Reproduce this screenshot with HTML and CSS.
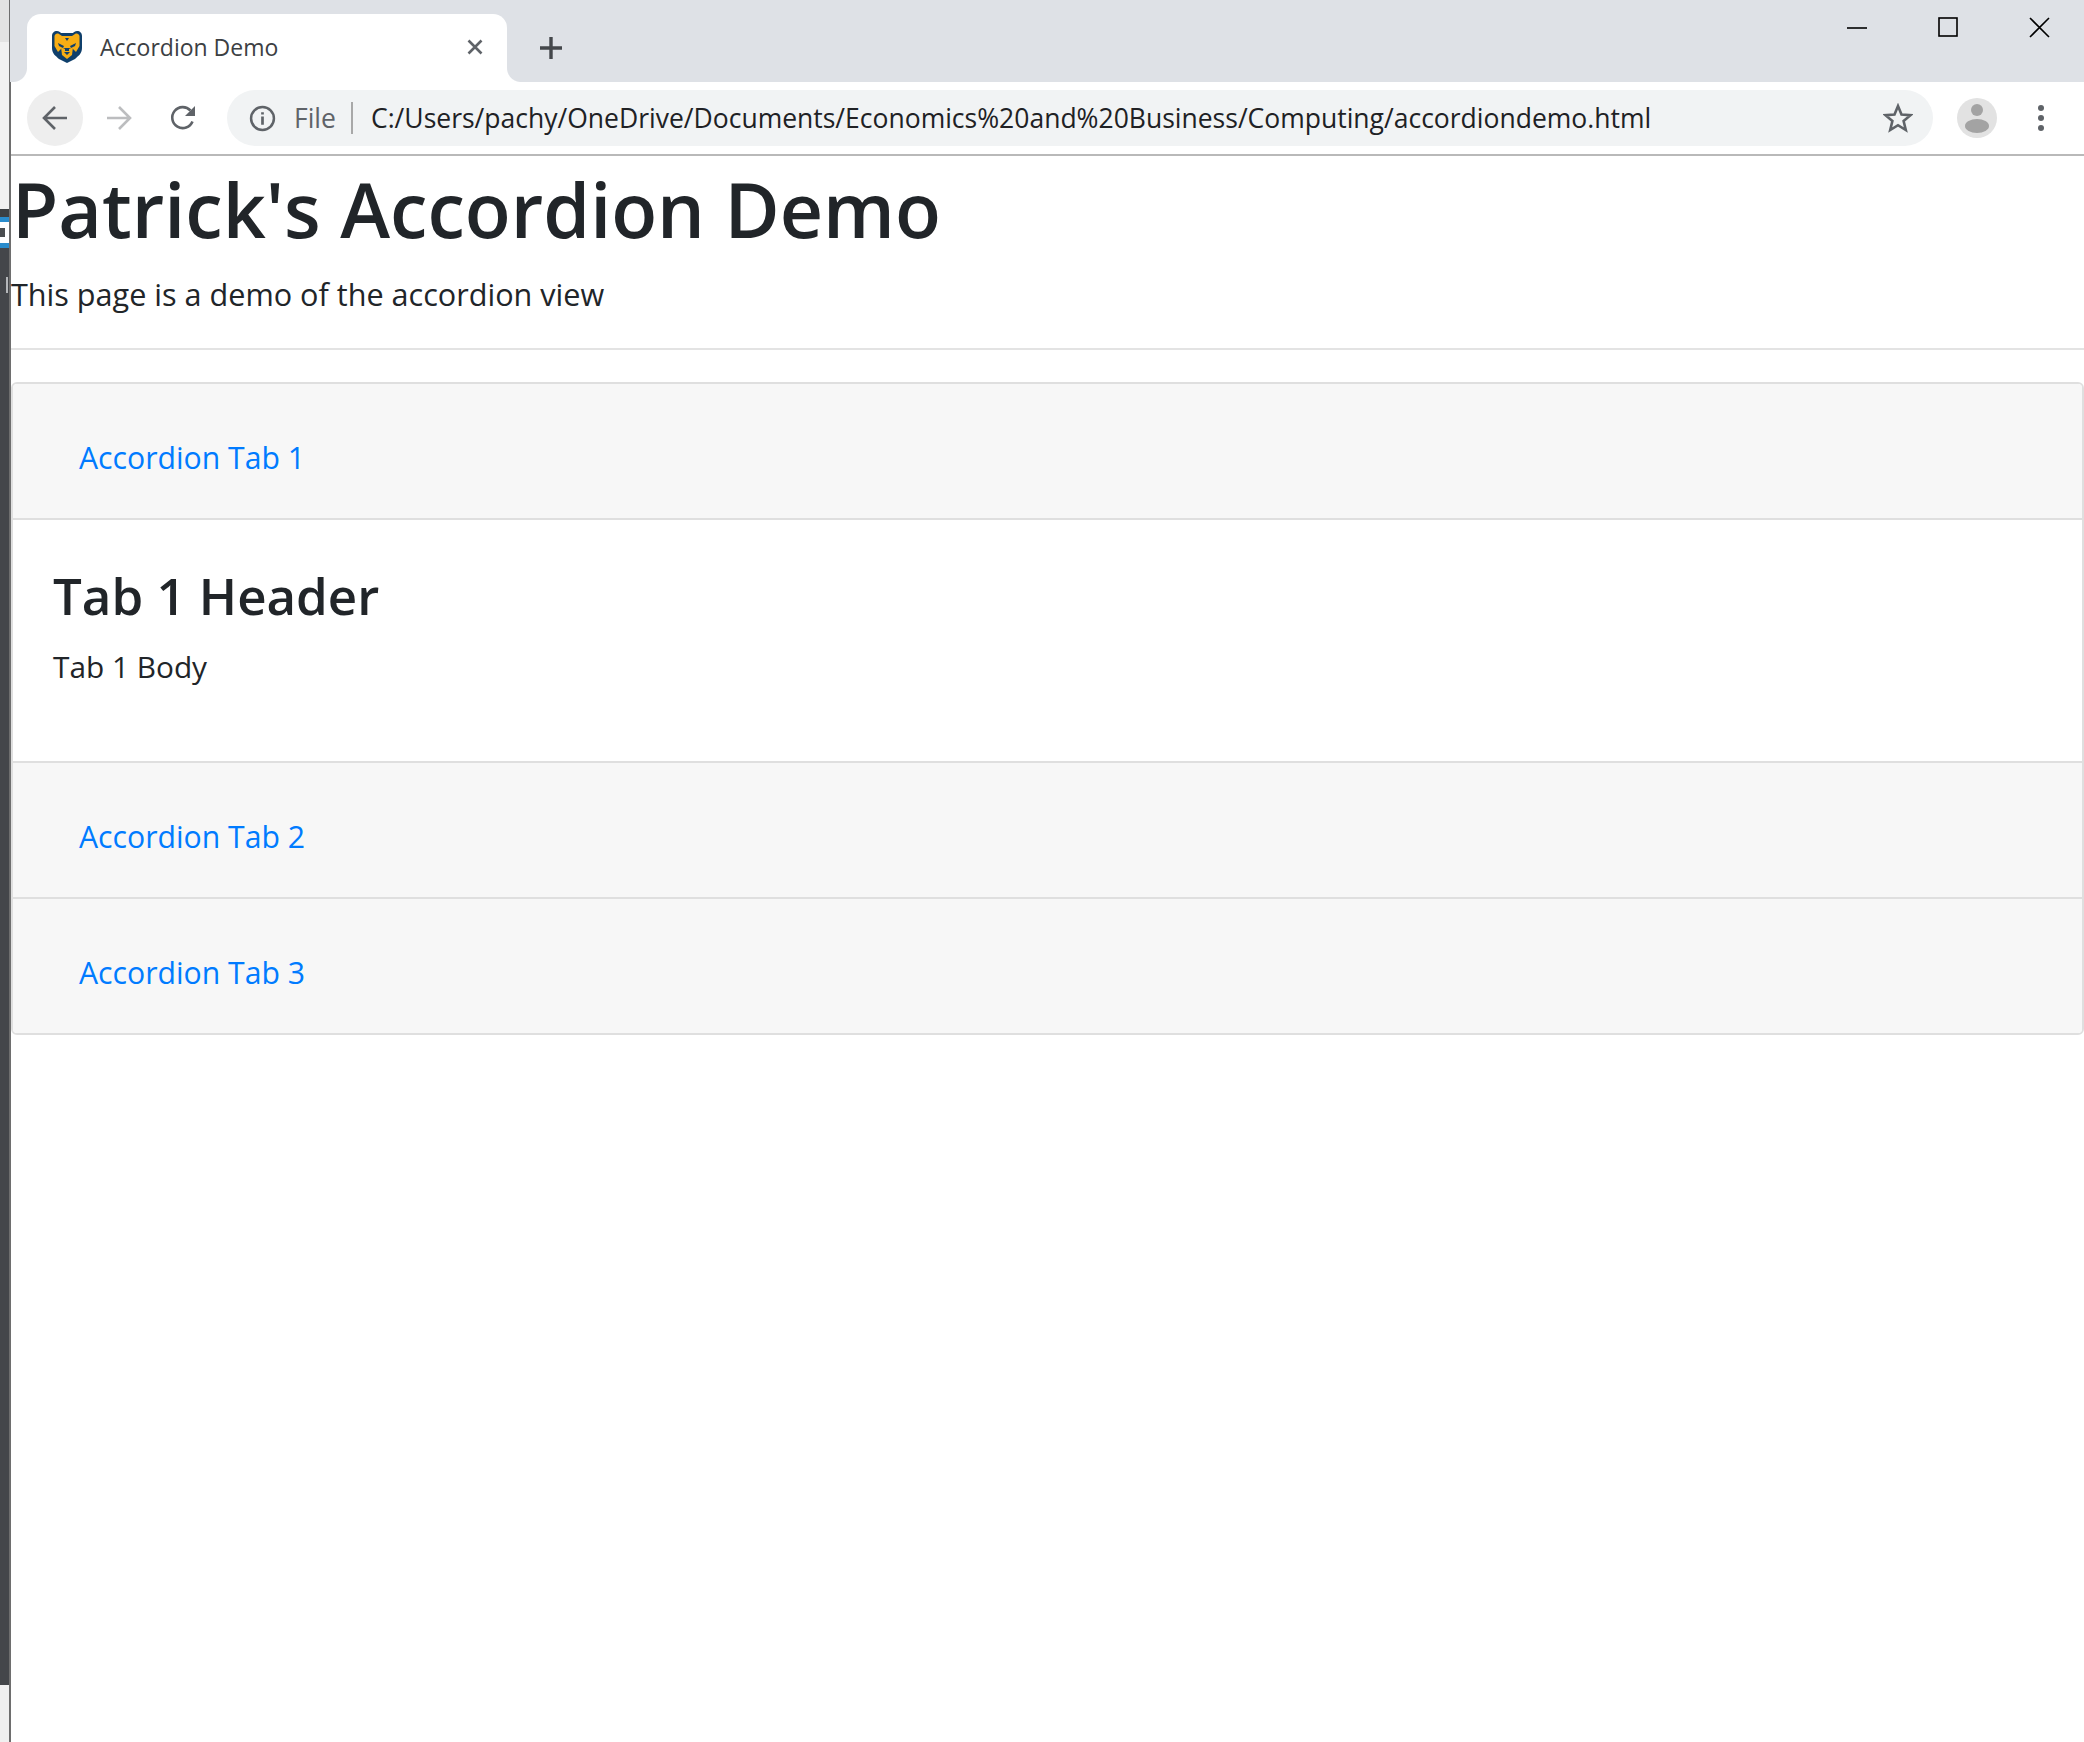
FILE: index.html
```html
<!DOCTYPE html>
<html lang="en">
<head>
    <meta charset="UTF-8">
    <title>Accordion Demo</title>
    <link rel="stylesheet" href="styles.css">
</head>
<body>
    <div class="Side-Strip">
        <div class="Strip-Top"></div>
        <div class="Strip-Light"></div>
        <div class="Strip-Blue">
            <svg class="Strip-Icon" viewBox="0 0 9 21">
                <path d="M0 0 H9 V21 H0 Z" fill="#ffffff"/>
                <path d="M0 6 H5 V15 H0 Z" fill="#4a4d50"/>
            </svg>
        </div>
        <div class="Strip-Dark">
            <div class="Strip-Mark"></div>
        </div>
        <div class="Strip-Bottom"></div>
    </div>
    <div class="Window">
        <div class="Tab-Strip">
            <div class="Tab">
                <svg class="Favicon" viewBox="0 0 30 32">
                    <path d="M0 5 C0 2 2 0 5 0 C7 0 8 1 9 2 H21 C22 1 23 0 25 0 C28 0 30 2 30 5 V17 C30 23 26 25 23 28 L15 32 L7 28 C4 25 0 23 0 17 Z" fill="#0f3f6b"/>
                    <path d="M2.5 5 C3 3 5 2 7 3 L10 5 H20 L23 3 C25 2 27 3 27.5 5 V15 L24 21 L20 17 H10 L6 21 L2.5 15 Z" fill="#f6ad14"/>
                    <path d="M9 16 L13 18 V20 H17 V18 L21 16 L20 24 L15 28 L10 24 Z" fill="#f6ad14"/>
                    <path d="M6 12 L12 15 L11 17 L7 15 Z M24 12 L18 15 L19 17 L23 15 Z M12 21 H18 L15 24 Z M13 7 L15 10 L17 7 Z" fill="#0f3f6b"/>
                </svg>
                <span class="Tab-Title">Accordion Demo</span>
                <svg class="Tab-Close" viewBox="0 0 16 16">
                    <path d="M1.5 1.5 L14.5 14.5 M14.5 1.5 L1.5 14.5" stroke="#5f6368" stroke-width="2.6" fill="none"/>
                </svg>
            </div>
            <svg class="New-Tab" viewBox="0 0 24 24">
                <path d="M12 1 V23 M1 12 H23" stroke="#44474b" stroke-width="3.4" fill="none"/>
            </svg>
            <div class="Window-Controls">
                <svg class="Win-Icon" viewBox="0 0 22 22"><path d="M0 11 H20" stroke="#000" stroke-width="1.6"/></svg>
                <svg class="Win-Icon" viewBox="0 0 22 22"><rect x="1" y="1" width="18" height="18" stroke="#000" stroke-width="1.6" fill="none"/></svg>
                <svg class="Win-Icon" viewBox="0 0 22 22"><path d="M1 1 L20 20 M20 1 L1 20" stroke="#000" stroke-width="1.6" fill="none"/></svg>
            </div>
        </div>
        <div class="Toolbar">
            <div class="Nav-Button Nav-Active">
                <svg viewBox="0 0 26 26"><path d="M25 13 H3 M13 2 L2 13 L13 24" stroke="#5f6368" stroke-width="2.6" fill="none"/></svg>
            </div>
            <div class="Nav-Button">
                <svg viewBox="0 0 26 26"><path d="M1 13 H23 M13 2 L24 13 L13 24" stroke="#bcbdbf" stroke-width="2.6" fill="none"/></svg>
            </div>
            <div class="Nav-Button">
                <svg viewBox="0 0 26 26"><path d="M22.5 16.5 A10.5 10.5 0 1 1 20.5 5.5" stroke="#5f6368" stroke-width="2.6" fill="none"/><path d="M25 1 V11 H15 Z" fill="#5f6368"/></svg>
            </div>
            <div class="Address-Bar">
                <svg class="Info-Icon" viewBox="0 0 26 26">
                    <circle cx="13" cy="13" r="11" stroke="#5f6368" stroke-width="2.4" fill="none"/>
                    <path d="M13 11 V19 M13 7 V9.2" stroke="#5f6368" stroke-width="2.6"/>
                </svg>
                <span class="File-Label">File</span>
                <span class="Address-Text">C:/Users/pachy/OneDrive/Documents/Economics%20and%20Business/Computing/accordiondemo.html</span>
                <svg class="Star-Icon" viewBox="0 0 30 30">
                    <path d="M15 3 L18.5 11.5 L27.5 12.2 L20.6 18 L22.8 27 L15 22.2 L7.2 27 L9.4 18 L2.5 12.2 L11.5 11.5 Z" stroke="#5f6368" stroke-width="2.6" fill="none"/>
                </svg>
            </div>
            <div class="Profile">
                <svg viewBox="0 0 40 40">
                    <circle cx="20" cy="20" r="20" fill="#e2e2e2"/>
                    <circle cx="20" cy="12" r="6" fill="#a3a3a3"/>
                    <ellipse cx="20" cy="28" rx="12" ry="7" fill="#a3a3a3"/>
                </svg>
            </div>
            <div class="Menu-Dots"><i></i><i></i><i></i></div>
        </div>
        <div class="Page">
            <h1 class="Page-Title">Patrick's Accordion Demo</h1>
            <p class="Page-Lead">This page is a demo of the accordion view</p>
            <hr class="Divider">
            <div class="Accordion">
                <div class="Accordion-Header"><a href="#tab1">Accordion Tab 1</a></div>
                <div class="Accordion-Body" id="tab1">
                    <h2>Tab 1 Header</h2>
                    <p>Tab 1 Body</p>
                </div>
                <div class="Accordion-Header"><a href="#tab2">Accordion Tab 2</a></div>
                <div class="Accordion-Header"><a href="#tab3">Accordion Tab 3</a></div>
            </div>
        </div>
    </div>
</body>
</html>
```

FILE: styles.css
```css
html, body {
    height: 100%;
}

body {
    margin: 0;
    display: flex;
    font-family: "Open Sans", "Noto Sans", sans-serif;
    color: #212529;
    background-color: #ffffff;
    overflow: hidden;
}

.Side-Strip {
    width: 11px;
    flex-shrink: 0;
    display: flex;
    flex-direction: column;
    box-sizing: border-box;
    border-right: 2px solid #6e6e6e;
}

.Strip-Top {
    height: 42px;
    background-color: #e3e3e3;
}

.Strip-Light {
    height: 167px;
    background-color: #f1f1f1;
}

.Strip-Blue {
    height: 39px;
    padding-top: 5px;
    box-sizing: border-box;
    background-color: #2a8ccc;
    border-top: 8px solid #3c3f42;
}

.Strip-Icon {
    display: block;
    width: 9px;
    height: 21px;
}

.Strip-Dark {
    flex: 1;
    padding-top: 29px;
    background-color: #44464a;
}

.Strip-Mark {
    width: 2px;
    height: 16px;
    margin-left: 6px;
    background-color: #b5b7ba;
}

.Strip-Bottom {
    height: 57px;
    background-color: #f0f0f0;
}

.Window {
    flex: 1;
    min-width: 0;
    display: flex;
    flex-direction: column;
}

.Tab-Strip {
    height: 82px;
    flex-shrink: 0;
    margin-left: -1px;
    display: flex;
    align-items: flex-end;
    background-color: #dee1e6;
}

.Tab {
    width: 480px;
    height: 68px;
    margin-left: 17px;
    padding: 0 24px 2px 25px;
    box-sizing: border-box;
    display: flex;
    align-items: center;
    background-color: #ffffff;
    border-radius: 14px 14px 0 0;
    position: relative;
}

.Tab::before,
.Tab::after {
    content: "";
    position: absolute;
    bottom: 0;
    width: 14px;
    height: 14px;
}

.Tab::before {
    left: -14px;
    background: radial-gradient(circle at 0 0, #dee1e6 13.5px, #ffffff 14.5px);
}

.Tab::after {
    right: -14px;
    background: radial-gradient(circle at 100% 0, #dee1e6 13.5px, #ffffff 14.5px);
}

.Favicon {
    width: 30px;
    height: 32px;
    margin-right: 18px;
}

.Tab-Title {
    flex: 1;
    font-size: 23px;
    color: #3c4043;
}

.Tab-Close {
    width: 16px;
    height: 16px;
}

.New-Tab {
    width: 24px;
    height: 24px;
    margin: 0 0 22px 32px;
}

.Window-Controls {
    margin-left: auto;
    margin-right: 33px;
    align-self: flex-start;
    padding-top: 17px;
    display: flex;
    gap: 69px;
}

.Win-Icon {
    width: 22px;
    height: 22px;
}

.Toolbar {
    height: 74px;
    flex-shrink: 0;
    padding-left: 16px;
    box-sizing: border-box;
    display: flex;
    align-items: center;
    border-bottom: 2px solid #b9b9b9;
}

.Nav-Button {
    width: 56px;
    height: 56px;
    margin-right: 8px;
    flex-shrink: 0;
    display: flex;
    align-items: center;
    justify-content: center;
    border-radius: 50%;
}

.Nav-Button svg {
    width: 26px;
    height: 26px;
}

.Nav-Active {
    background-color: #eeeeee;
}

.Address-Bar {
    width: 1706px;
    height: 56px;
    margin-left: 8px;
    padding: 0 20px 0 22px;
    box-sizing: border-box;
    flex-shrink: 0;
    display: flex;
    align-items: center;
    background-color: #f1f3f4;
    border-radius: 28px;
}

.Info-Icon {
    width: 27px;
    height: 27px;
    margin-right: 18px;
}

.File-Label {
    padding-right: 15px;
    font-size: 26.5px;
    line-height: 32px;
    color: #5f6368;
    border-right: 2px solid #a8a8a8;
}

.Address-Text {
    flex: 1;
    margin-left: 18px;
    font-size: 26.5px;
    color: #202124;
    white-space: nowrap;
}

.Star-Icon {
    width: 30px;
    height: 30px;
}

.Profile {
    width: 40px;
    height: 40px;
    margin-left: 24px;
    flex-shrink: 0;
}

.Menu-Dots {
    margin-left: 41px;
    display: flex;
    flex-direction: column;
    gap: 4px;
}

.Menu-Dots i {
    width: 6px;
    height: 6px;
    background-color: #5f6368;
    border-radius: 50%;
}

.Page-Title {
    margin: 5px 0 0 1px;
    font-size: 75.3px;
    font-weight: 600;
    line-height: 96px;
}

.Page-Lead {
    margin: 13px 0 0;
    font-size: 30.6px;
    line-height: 48px;
}

.Divider {
    margin: 30px 0 32px;
    border: 0;
    border-top: 2px solid #e3e3e3;
}

.Accordion {
    border: 2px solid #dfdfdf;
    border-radius: 6px;
    overflow: hidden;
}

.Accordion-Header {
    height: 134px;
    padding: 50px 0 0 66px;
    box-sizing: border-box;
    font-size: 30.2px;
    line-height: 48px;
    background-color: #f7f7f7;
}

.Accordion-Header + .Accordion-Header {
    height: 136px;
    padding-top: 50px;
    border-top: 2px solid #dfdfdf;
}

.Accordion-Header a {
    color: #007bff;
    text-decoration: none;
}

.Accordion-Body {
    height: 245px;
    padding: 43px 0 0 40px;
    box-sizing: border-box;
    border-top: 2px solid #dfdfdf;
    border-bottom: 2px solid #dfdfdf;
}

.Accordion-Body h2 {
    margin: 0 0 16px;
    font-size: 51px;
    font-weight: 600;
    line-height: 64px;
}

.Accordion-Body p {
    margin: 0;
    font-size: 29.8px;
    line-height: 48px;
}
```
